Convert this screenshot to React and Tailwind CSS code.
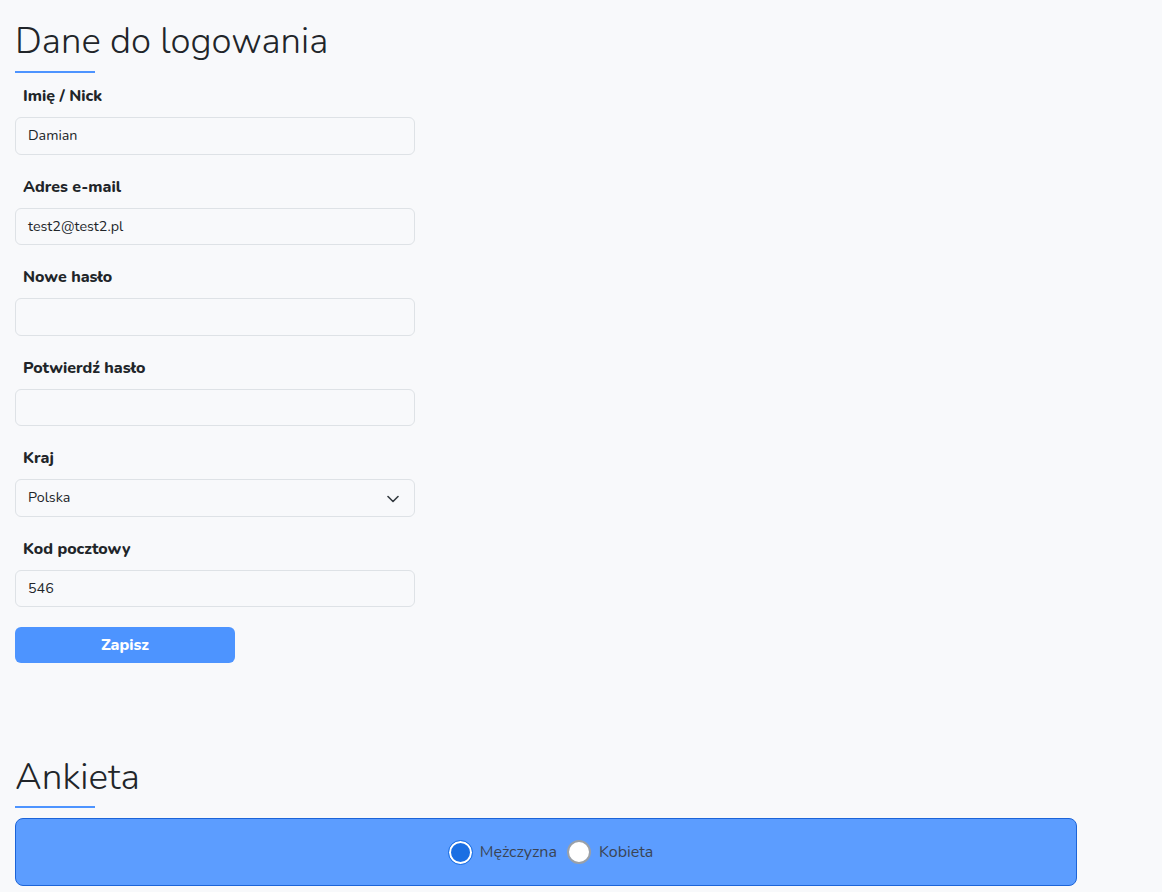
import React from "react";

const font = { fontFamily: '"Nunito", "Open Sans", "Liberation Sans", sans-serif' };

function Field({ label, value, select }) {
  return (
    <div className="flex flex-col">
      <label className="pl-2 text-[16px] font-extrabold text-[#212529] leading-[24px] mt-[1px] mb-[9px]">{label}</label>
      <div className="relative w-[400px] h-[37.5px] border border-[#dee2e6] rounded-[6px] bg-[#f8f9fb] flex items-center pl-3 text-[14.3px] text-[#212529]">
        {value}
        {select && (
          <svg className="absolute right-[15px] top-[14.5px]" width="12" height="8" viewBox="0 0 12 8" fill="none">
            <path d="M1 1.5l5 5 5-5" stroke="#343a40" strokeWidth="1.6" strokeLinecap="round" strokeLinejoin="round" />
          </svg>
        )}
      </div>
    </div>
  );
}

export default function App() {
  return (
    <div className="min-h-[892px] w-full bg-[#f8f9fb] pl-[15px] pt-[17px]" style={font}>
      <h1 className="text-[36.6px] font-light leading-[48px] text-[#212529]">Dane do logowania</h1>
      <div className="w-[80px] h-[2px] bg-[#4d94ff] mt-[6px] mb-[10px]"></div>
      <div className="flex flex-col gap-[19px]">
        <Field label="Imię / Nick" value="Damian" />
        <Field label="Adres e-mail" value="test2@test2.pl" />
        <Field label="Nowe hasło" value="" />
        <Field label="Potwierdź hasło" value="" />
        <Field label="Kraj" value="Polska" select />
        <Field label="Kod pocztowy" value="546" />
      </div>
      <button className="mt-[20px] w-[220px] h-[36px] rounded-[6px] bg-[#4d94ff] text-white text-[16px] font-extrabold">Zapisz</button>
      <h2 className="mt-[90px] text-[37px] font-light leading-[48px] text-[#212529]">Ankieta</h2>
      <div className="w-[80px] h-[2px] bg-[#4d94ff] mt-[5px] mb-[10px]"></div>
      <div className="w-[1062px] h-[68px] rounded-[8px] bg-[#5c9dff] border border-[#1c64d8] flex items-center justify-center gap-[10px] pl-[10px] text-[16px] text-[#3a4454]">
        <div className="flex items-center gap-[8px]">
          <span className="w-[23px] h-[23px] rounded-full bg-[#1a6fe3] border-[2px] border-white outline outline-1 outline-[#1a6fe3] inline-block"></span>
          <span>Mężczyzna</span>
        </div>
        <div className="flex items-center gap-[8px]">
          <span className="w-[24px] h-[24px] rounded-full bg-white border-[2px] border-[#9aa0a8] inline-block"></span>
          <span>Kobieta</span>
        </div>
      </div>
    </div>
  );
}
